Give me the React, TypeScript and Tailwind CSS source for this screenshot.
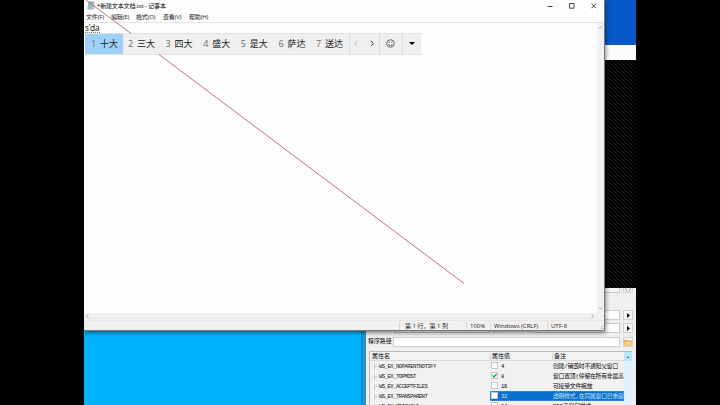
import React from "react";

const ui = "font-['Open_Sans','Noto_Sans_CJK_SC',sans-serif]";
const song = "font-['Liberation_Mono','Noto_Sans_CJK_SC',monospace]";

const menus = [
  { label: "文件(F)", w: "w-[25px]" },
  { label: "编辑(E)", w: "w-[25px]" },
  { label: "格式(O)", w: "w-[27px]" },
  { label: "查看(V)", w: "w-[26px]" },
  { label: "帮助(H)", w: "w-[26px]" },
];

const candidates = ["十大", "三大", "四大", "盛大", "是大", "萨达", "送达"];

const rows = [
  { name: "WS_EX_NOPARENTNOTIFY", value: "4", note: "创建/销毁时不通知父窗口" },
  { name: "WS_EX_TOPMOST", value: "8", note: "窗口置顶(停留在所有非最高", checked: true },
  { name: "WS_EX_ACCEPTFILES", value: "16", note: "可接受文件拖放" },
  { name: "WS_EX_TRANSPARENT", value: "32", note: "透明样式,在同属窗口已重画", selected: true },
  { name: "WS_EX_MDICHILD", value: "64", note: "MDI子窗口样式" },
];

function Chevron({ d, className }: { d: string; className: string }) {
  return (
    <svg viewBox="0 0 6 6" className={className} fill="none" stroke="currentColor" strokeWidth="0.8">
      <path d={d} />
    </svg>
  );
}

function NotepadIcon() {
  return (
    <svg viewBox="0 0 9 10" className="h-[9px] w-[8px] shrink-0">
      <path d="M2 1.5h6L7 9H1Z" fill="#a9d5e8" stroke="#6e8e9b" strokeWidth=".6" />
      <path d="M2.2 1h6" stroke="#777" strokeWidth=".9" strokeDasharray="1 .5" />
      <path d="M2.5 3.4h4M2.3 5h4M2 6.6h4" stroke="#599bb4" strokeWidth=".6" />
      <path d="M7.5 4.5 6 9h2l.7-4" fill="#eee4cb" stroke="#918f87" strokeWidth=".4" />
    </svg>
  );
}

function ImeBar() {
  return (
    <div className="flex h-[22px] w-[336px] border-y border-[#e3e3e3] bg-[#f0efef] text-[#202020]">
      {candidates.map((text, i) => (
        <div
          key={text}
          className={`flex shrink-0 items-center whitespace-nowrap pb-px ${
            i === 0 ? "w-[38px] bg-[#9dd1fb] pl-[6px]" : "w-[37.6px] pl-[5px]"
          }`}
        >
          <span className="w-[9px] font-['Open_Sans',sans-serif] text-[9px] leading-none text-[#6a6a6a]">{i + 1}</span>
          <span className="font-['Noto_Sans_CJK_SC',sans-serif] text-[9px] leading-none">{text}</span>
        </div>
      ))}
      <div className="flex w-[30px] shrink-0 items-center justify-between border-l border-[#dcdcdc] pb-px pl-[2px] pr-[3px]">
        <Chevron d="M4.3 .8 2.2 3l2.1 2.2" className="size-[7px] text-[#b4b4b4]" />
        <Chevron d="M1.7 .8 3.8 3 1.7 5.2" className="size-[7px] text-[#333]" />
      </div>
      <div className="flex w-[23px] shrink-0 items-center justify-center border-l border-[#dcdcdc] pb-px">
        <svg viewBox="0 0 10 10" className="size-[9px]" fill="none" stroke="#333" strokeWidth=".8">
          <circle cx="5" cy="5" r="4.2" />
          <path d="M2.8 5.7c.6 2 3.8 2 4.4 0" />
          <path d="M3 3.7h1M6 3.7h1" strokeWidth="1" />
        </svg>
      </div>
      <div className="flex flex-1 items-center justify-center border-l border-[#dcdcdc] pb-[2px]">
        <svg viewBox="0 0 6 3" className="h-[3px] w-[6px]">
          <path d="M0 0h6L3 3Z" fill="#000" />
        </svg>
      </div>
    </div>
  );
}

function Notepad() {
  return (
    <div
      className={`absolute left-0 top-0 flex h-[331px] w-[521px] flex-col border-b border-r border-[#777] bg-[#fdfdfd] text-[#222] shadow-[1px_2px_4px_rgba(0,0,0,0.45)] ${ui}`}
    >
      <div className="flex h-[11px] shrink-0 items-center pl-[3px] pr-[4px]">
        <NotepadIcon />
        <span className="ml-[2px] whitespace-nowrap text-[6px] leading-none tracking-[-0.15px] text-black">*新建文本文档.txt - 记事本</span>
        <svg viewBox="0 0 54 8" className="ml-auto h-[8px] w-[54px]" fill="none" stroke="#333" strokeWidth=".9">
          <path d="M1.5 4.5h5M23.5 1.5h4.5v4.7h-4.5ZM45.5 1.5l4.5 4.7M50 1.5 45.5 6.2" />
        </svg>
      </div>
      <div className="flex h-[11px] shrink-0 items-center pb-px pl-[2px] pt-[2px]">
        {menus.map((m) => (
          <span key={m.label} className={`${m.w} whitespace-nowrap text-[6px] leading-none tracking-[-0.15px]`}>
            {m.label}
          </span>
        ))}
      </div>
      <div className="flex h-[291px] shrink-0 border-t border-[#e4e4e4]">
        <div className="flex flex-1 flex-col pl-px">
          <div className="h-[10px] w-[15px] whitespace-nowrap border-b border-dotted border-[#777] font-['Noto_Sans',sans-serif] text-[8.4px] leading-[9px] tracking-[-0.2px]">
            s'da
          </div>
          <ImeBar />
        </div>
        <div className="flex w-[7px] flex-col items-center justify-between bg-[#f0f0f0] py-[2px]">
          <Chevron d="M1 4 3 2l2 2" className="size-[5px] text-[#888]" />
          <Chevron d="M1 2l2 2 2-2" className="size-[5px] text-[#888]" />
        </div>
      </div>
      <div className="flex h-[7px] shrink-0 items-center justify-between bg-[#f0efee] pl-px pr-[9px]">
        <Chevron d="M4 1 2 3l2 2" className="size-[5px] text-[#888]" />
        <Chevron d="M2 1l2 2-2 2" className="size-[5px] text-[#888]" />
      </div>
      <div className="flex flex-1 items-center border-t border-[#e6e6e6] bg-[#f1f0ef] text-[6px] leading-none">
        <div className="w-[315px]" />
        <div className="flex h-[8px] w-[67px] items-center whitespace-pre border-l border-[#d9d9d9] pl-[5px] pt-px">第 1 行，第 1 列</div>
        <div className="flex h-[8px] w-[24px] items-center border-l border-[#d9d9d9] pl-[3px] pt-px">100%</div>
        <div className="flex h-[8px] w-[57px] items-center whitespace-nowrap border-l border-[#d9d9d9] pl-[3px] pt-px">Windows (CRLF)</div>
        <div className="flex h-[8px] items-center border-l border-[#d9d9d9] pl-[3px] pt-px">UTF-8</div>
        <svg viewBox="0 0 5 5" className="ml-auto mt-[3px] size-[4px]">
          <path d="M4 0v1M2 2v1M4 2v1M0 4v1M2 4v1M4 4v1" stroke="#aaa" />
        </svg>
      </div>
      <svg viewBox="0 0 520 331" className="pointer-events-none absolute left-0 top-0 h-[331px] w-[520px]">
        <path d="M2 0 47 33.5M75 54.5 380 283.5" stroke="#b94c53" strokeWidth=".8" fill="none" />
      </svg>
    </div>
  );
}

function PanelButton({ children }: { children?: React.ReactNode }) {
  return (
    <div className="flex h-[10px] w-[10px] items-center justify-center border border-[#cdd2d5] bg-[#f6f6f6]">{children}</div>
  );
}

function Play() {
  return (
    <svg viewBox="0 0 3 5" className="h-[5px] w-[3px]">
      <path d="M0 0 3 2.5 0 5Z" />
    </svg>
  );
}

function StylePanel() {
  return (
    <div className={`absolute left-[277px] top-[288px] flex h-[117px] w-[275px] flex-col overflow-hidden border-l border-[#086c9c] bg-[#efefef] text-black ${song}`}>
      <div className="flex flex-1 flex-col border-l-3 border-[#0b9bdc]">
        <div className="flex flex-1 flex-col border-l border-[#5c7f92] pl-[2px]">
          <div className="flex h-[5px] shrink-0 items-end gap-[3px] pl-[26px] pr-[3px]">
            <div className="h-[5px] flex-1 border border-t-0 border-[#c9c9c9] bg-[#f3f3f3]" />
            <svg viewBox="0 0 10 5" className="h-[5px] w-[10px]" fill="none" stroke="#999" strokeWidth=".8">
              <path d="M.5 0v4.5h9V0" stroke="#ccc" />
              <path d="M2.5 0 4 3.5M7.5 0 6 3.5" />
            </svg>
          </div>
          <div className="flex h-[40px] shrink-0 flex-col gap-[3px] pl-[26px] pr-[3px] pt-[17px]">
            {[0, 1].map((n) => (
              <div key={n} className="flex gap-[3px]">
                <div className="h-[10px] w-[96px] border border-[#c9ced1] bg-white" />
                <PanelButton />
                <div className="ml-[24px] h-[10px] flex-1 border border-[#c9ced1] bg-white" />
                <PanelButton>
                  <Play />
                </PanelButton>
              </div>
            ))}
          </div>
          <div className="mt-[4px] flex h-[10px] shrink-0 items-center gap-[3px] pr-[3px]">
            <span className="w-[22px] whitespace-nowrap text-[5.9px] leading-none">程序路径</span>
            <div className="h-[10px] flex-1 border border-[#c9ced1] bg-white" />
            <PanelButton>
              <svg viewBox="0 0 9 8" className="h-[7px] w-[8px]">
                <path d="M.5 1.2h3l1 1h4v5h-8Z" fill="#efb14f" stroke="#d59b42" strokeWidth=".5" />
                <path d="M.7 3.4h7.6v3.7H.7Z" fill="#ffd37c" />
              </svg>
            </PanelButton>
          </div>
          <div className="ml-px mr-[4px] mt-[4px] flex flex-1 border-l border-t border-[#b4babd] bg-[#f1f1f1]">
            <div className="flex h-[53px] min-w-0 flex-1 flex-col text-[6px] leading-none">
              <div className="flex h-[9px] shrink-0 items-center border-b border-[#d8d8d8] bg-[#f2f4f4] pl-[2px] pt-px">
                <span className="w-[118px]">属性名</span>
                <span className="w-[62px] border-l border-[#d1d1d1] pl-px">属性值</span>
                <span className="border-l border-[#d1d1d1] pl-px">备注</span>
              </div>
              {rows.map((r) => (
                <div key={r.name} className="flex h-[10px] shrink-0 items-center whitespace-nowrap">
                  <div className="flex w-[120px] shrink-0 items-center pl-[4px] pt-px">
                    <span className="h-[6px] w-[5px] shrink-0 border-l border-[#ccc]">
                      <span className="block h-[3px] w-[3px] border-b border-[#ccc]" />
                    </span>
                    <span className="font-['Liberation_Mono',monospace] text-[5.6px] tracking-[-0.52px] text-[#222]">{r.name}</span>
                  </div>
                  <div
                    className={`flex h-full min-w-0 flex-1 items-center ${
                      r.selected ? "bg-[#0871cd] text-[#c8e5ff] outline-1 -outline-offset-1 outline-dotted outline-[#4695dd]" : ""
                    }`}
                  >
                    <div className="flex w-[62px] shrink-0 items-center gap-[3px] pl-px">
                      <span className="mb-[2px] flex size-[7px] shrink-0 items-center justify-center border border-[#c3c6c9] bg-white">
                        {r.checked && (
                          <svg viewBox="0 0 5 5" className="size-[5px] shrink-0" fill="none" stroke="#13a32c" strokeWidth="1.2">
                            <path d="M.5 2.3 2 4 4.5 1" />
                          </svg>
                        )}
                      </span>
                      <span className="pt-px text-[5.6px] tracking-[-0.4px]">{r.value}</span>
                    </div>
                    <span className="pl-px pt-px text-[5.8px] tracking-[-0.18px]">{r.note}</span>
                  </div>
                </div>
              ))}
            </div>
            <div className="relative flex w-[8px] shrink-0 flex-col bg-[#ddf2fa]">
              <div className="flex h-[9px] items-center justify-center bg-[#b5e6fa]">
                <svg viewBox="0 0 4 3" className="h-[2px] w-[4px]">
                  <path d="M0 3 2 0l2 3Z" fill="#386b87" />
                </svg>
              </div>
            </div>
          </div>
        </div>
      </div>
    </div>
  );
}

export default function App() {
  return (
    <div className="flex h-[405px] w-[720px] justify-center overflow-hidden bg-black">
      <div className="relative h-[405px] w-[552px] overflow-hidden bg-[#00b1fc]">
        <div className="absolute right-0 top-0 flex h-[288px] w-[34px] flex-col">
          <div className="h-[45px] bg-[#0759ca]" />
          <div className="h-[15px] bg-[#fcfcfc]" />
          <div className="flex-1 bg-black bg-[repeating-linear-gradient(45deg,#1c1c1c_0px,#1c1c1c_1px,#000_1px,#000_2.83px)]" />
        </div>
        <StylePanel />
        <Notepad />
      </div>
    </div>
  );
}
